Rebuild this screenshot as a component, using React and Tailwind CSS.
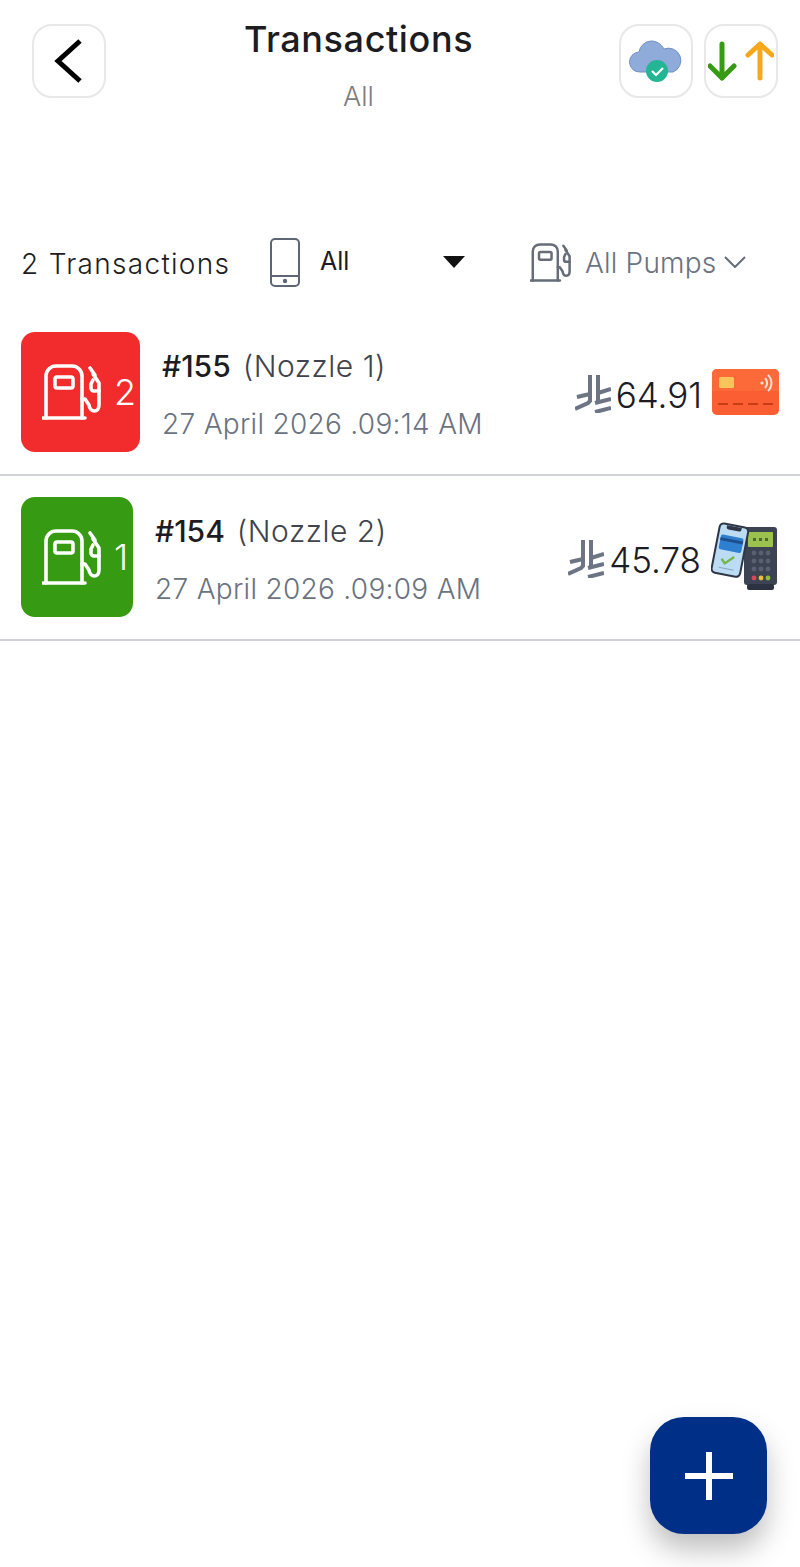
const PumpIcon = ({ className }) => (
  <svg viewBox="0 0 59 56" fill="none" stroke="currentColor" strokeWidth="3.6" strokeLinecap="round" strokeLinejoin="round" className={className}>
    <path d="M1 54h42" />
    <path d="M4 54V12A10 10 0 0 1 14 2h16a10 10 0 0 1 10 10v42" />
    <rect x="13" y="13" width="18" height="11" rx="2" />
    <path d="M40 35h3l4 6c1 8 10 8 10 0V19l-6-9" />
    <path d="M48 4l5 7" />
    <path d="M57 27h-5a3 3 0 0 1-3-3v-4l2-4" />
  </svg>
);

const RiyalIcon = ({ className }) => (
  <svg viewBox="0 0 36 39" fill="none" stroke="#6d7484" strokeWidth="4" className={className}>
    <path d="M15 1v26l-2 2L0 35" />
    <path d="M23 1v28" />
    <path d="M2 23l13-3" />
    <path d="M23 19l13-4" />
    <path d="M20 29l16-4" />
    <path d="M20 38l16-4" />
  </svg>
);

const CardIcon = () => (
  <svg viewBox="0 0 67 46" className="w-[67px] h-[46px]">
    <rect width="67" height="46" rx="5" fill="#fb5e32" />
    <path d="M0 5a5 5 0 0 1 5-5h57a5 5 0 0 1 5 5v17H0z" fill="#fd6a3a" />
    <rect x="7" y="8" width="15" height="11" rx="1.5" fill="#f7c65b" />
    <circle cx="50" cy="14" r="1.6" fill="#fde2d4" />
    <path d="M53 9a7 7 0 0 1 0 10M56 6a11 11 0 0 1 0 16" fill="none" stroke="#fde2d4" strokeWidth="2" />
    <path d="M6 35h56" stroke="#c83c17" strokeWidth="2" strokeDasharray="10 5" />
  </svg>
);

const PosIcon = () => (
  <svg viewBox="0 0 68 70" className="w-[68px] h-[70px]">
    <rect x="33" y="5" width="33" height="58" rx="3" fill="#3c4352" />
    <rect x="36" y="62" width="27" height="6" rx="2" fill="#2c3240" />
    <rect x="37" y="10" width="25" height="15" rx="1" fill="#9bc14f" />
    <path d="M42 17.5h3M48 17.5h3M54 17.5h3" stroke="#4d6a28" strokeWidth="3" />
    <g fill="#596072">
      <circle cx="43" cy="31" r="2.4" /><circle cx="50" cy="31" r="2.4" /><circle cx="57" cy="31" r="2.4" />
      <circle cx="43" cy="39" r="2.4" /><circle cx="50" cy="39" r="2.4" /><circle cx="57" cy="39" r="2.4" />
      <circle cx="43" cy="47" r="2.4" /><circle cx="50" cy="47" r="2.4" /><circle cx="57" cy="47" r="2.4" />
    </g>
    <circle cx="43" cy="56" r="2.4" fill="#e0455a" />
    <circle cx="50" cy="56" r="2.4" fill="#f4b93a" />
    <circle cx="57" cy="56" r="2.4" fill="#8fbc3f" />
    <g transform="rotate(11 18 30)">
      <rect x="4" y="3" width="29" height="50" rx="4" fill="#bcdcf4" stroke="#2f3646" strokeWidth="2" />
      <path d="M11 4h15v2a2 2 0 0 1-2 2H13a2 2 0 0 1-2-2z" fill="#2f3646" />
      <rect x="7" y="14" width="23" height="15" rx="2" fill="#2f7fd0" />
      <rect x="7" y="17" width="23" height="3" fill="#1d4f8c" />
      <path d="M12 38l4 4 8-8" fill="none" stroke="#74b64a" strokeWidth="2.4" />
      <path d="M11 47h15" stroke="#8aa6bc" strokeWidth="1" />
    </g>
  </svg>
);

const rows = [
  { id: "#155", nozzle: "(Nozzle 1)", date: "27 April 2026 .09:14 AM", amount: "64.91", pump: "2", tile: "bg-[#f22c2c] w-[119px]", Pay: CardIcon },
  { id: "#154", nozzle: "(Nozzle 2)", date: "27 April 2026 .09:09 AM", amount: "45.78", pump: "1", tile: "bg-[#369a12] w-[112px]", Pay: PosIcon },
];

export default function App() {
  return (
    <div className="relative w-[800px] h-[1567px] bg-white overflow-hidden font-['Inter',sans-serif] text-[#1c1c22]">
      <header className="flex items-start justify-between pt-6 pl-8 pr-[22px] h-[237px]">
        <button className="w-[74px] h-[74px] rounded-[20px] border-2 border-[#e8e8e8] flex items-center justify-center">
          <svg viewBox="0 0 30 44" className="w-[30px] h-[44px]" fill="none" stroke="#000" strokeWidth="5">
            <path d="M26 2L4 22l22 20" />
          </svg>
        </button>
        <div className="flex flex-col items-center mr-2">
          <h1 className="text-[36px] leading-[30px] font-medium tracking-[0.6px]">Transactions</h1>
          <p className="text-[27px] font-light leading-[30px] mt-[28px] text-[#7d7d7d]">All</p>
        </div>
        <div className="flex gap-[11px]">
          <button className="w-[74px] h-[74px] rounded-[20px] border-2 border-[#e8e8e8] flex items-center justify-center">
            <svg viewBox="0 0 54 46" className="w-[54px] h-[46px]">
              <path d="M11 34a10 10 0 0 1-1-20 13 13 0 0 1 12-11c6 0 10 3 13 8a11 11 0 0 1 9 23z" fill="#8fabd9" stroke="#6f8fc4" strokeWidth="1" />
              <circle cx="28" cy="33" r="11" fill="#24b594" />
              <path d="M23 33l4 4 7-7" fill="none" stroke="#fff" strokeWidth="2.2" />
            </svg>
          </button>
          <button className="w-[74px] h-[74px] rounded-[20px] border-2 border-[#e8e8e8] flex items-center justify-center">
            <svg viewBox="0 0 66 40" className="w-[66px] h-[40px]">
              <path d="M14 3v34M2 25l12 12 12-12" fill="none" stroke="#369a12" strokeWidth="5" strokeLinecap="round" strokeLinejoin="round" />
              <path d="M52 37V3M40 14L52 3l12 11" fill="none" stroke="#f5a81c" strokeWidth="5" strokeLinecap="round" strokeLinejoin="round" />
            </svg>
          </button>
        </div>
      </header>

      <div className="flex items-center pl-[21px] h-[50px]">
        <span className="w-[249px] pt-[3px] text-[28px] font-light tracking-[1.3px] shrink-0">2 Transactions</span>
        <svg viewBox="0 0 30 49" className="w-[30px] h-[49px] shrink-0" fill="none" stroke="#5e6673" strokeWidth="2">
          <rect x="1" y="1" width="28" height="47" rx="4" />
          <path d="M1 38h28" />
          <circle cx="15" cy="43" r="1.2" fill="#5e6673" />
        </svg>
        <span className="ml-5 text-[25px] w-[123px]">All</span>
        <svg viewBox="0 0 22 12" className="w-[22px] h-3"><path d="M0 0h22L11 12z" fill="#111" /></svg>
        <PumpIcon className="ml-[65px] w-[41px] h-[39px] text-[#666d78]" />
        <span className="ml-[14px] pt-[2px] text-[28px] font-light tracking-[0.2px] text-[#6b7280]">All Pumps</span>
        <svg viewBox="0 0 22 12" className="ml-2 w-[22px] h-3" fill="none" stroke="#666d78" strokeWidth="2"><path d="M1 1l10 10L21 1" /></svg>
      </div>

      <ul className="mt-6">
        {rows.map((row) => (
          <li key={row.id} className="flex items-center h-[165px] px-[21px] pb-[2px] border-b-2 border-[#cfd2d6]">
            <div className={`${row.tile} h-[120px] rounded-[14px] flex items-center pl-[21px] text-white shrink-0`}>
              <PumpIcon className="w-[59px] h-14" />
              <span className="ml-[13px] text-[36px] font-light leading-none">{row.pump}</span>
            </div>
            <div className="ml-[22px] pt-[7px] flex-1">
              <p className="text-[30px] leading-[36px]">
                <span className="font-medium">{row.id}</span>
                <span className="ml-3 font-light tracking-[0.5px] text-[#3f434b]">{row.nozzle}</span>
              </p>
              <p className="mt-[22px] text-[28px] font-light tracking-[0.3px] leading-[36px] text-[#6b7280]">{row.date}</p>
            </div>
            <RiyalIcon className="w-9 h-[39px] mt-1" />
            <span className="ml-[5px] mr-[10px] mt-[7px] text-[35px] font-light leading-none">{row.amount}</span>
            <row.Pay />
          </li>
        ))}
      </ul>

      <button className="absolute left-[650px] top-[1417px] w-[117px] h-[117px] rounded-[34px] bg-[#002f87] shadow-[0_16px_28px_rgba(0,0,0,0.25)] flex items-center justify-center">
        <svg viewBox="0 0 48 48" className="w-12 h-12" fill="#fff">
          <path d="M21 0h6v21h21v6H27v21h-6V27H0v-6h21z" />
        </svg>
      </button>
    </div>
  );
}
